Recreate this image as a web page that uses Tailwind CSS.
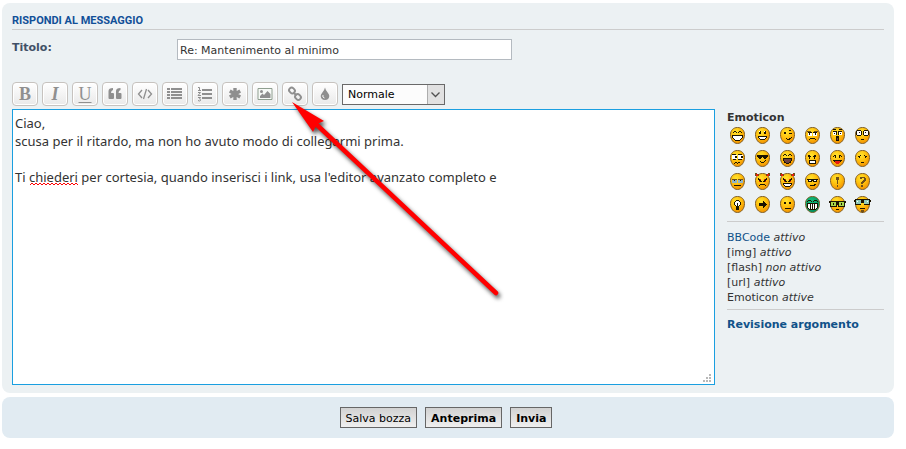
<!DOCTYPE html>
<html lang="it">
  <head>
    <meta charset="utf-8" />
    <title>Rispondi al messaggio</title>
    <script src="https://cdn.jsdelivr.net/npm/@tailwindcss/browser@4"></script>
  </head>
  <body class="bg-white font-['DejaVu_Sans',sans-serif] text-[11px] leading-[15px] text-[#333333]">
    <form class="relative flex flex-col gap-1 pt-[3px] pr-3 pl-[2px]">
      <section class="rounded-lg bg-[#ecf1f3] px-[10px] pt-[10px] pb-2">
        <h3 class="border-b border-[#cccccc] pb-px font-['Roboto',sans-serif] text-[11px] font-bold leading-[15px] text-[#115098]">RISPONDI AL MESSAGGIO</h3>

        <div class="flex pt-[9px]">
          <label for="subject" class="w-[165px] pt-px font-bold text-[#425067]">Titolo:</label>
          <input id="subject" type="text" value="Re: Mantenimento al minimo" class="h-[21px] w-[335px] border border-[#b4bac0] bg-white px-[2px] pt-px" />
        </div>

        <div id="toolbar" class="flex items-center gap-1 pt-[22px] pb-[3px]">
          <div class="relative">
            <select aria-label="Dimensione carattere" class="h-[21px] w-[103px] appearance-none border border-[#696969] bg-[#fcfcfc] pt-px pl-[5px] text-black">
              <option>Normale</option>
            </select>
            <svg class="pointer-events-none absolute top-px right-px" width="17" height="19" viewBox="0 0 17 19" fill="none">
              <path d="M0 0H17V19H0Z" fill="#e1e1e1" />
              <path d="M.5 0V19" stroke="#adadad" />
              <path d="M4.500 7.500L8.500 11.500L12.500 7.500" stroke="#505050" stroke-width="1.300" />
            </svg>
          </div>
        </div>

        <div class="flex gap-3">
          <div class="relative flex-1">
            <textarea aria-label="Messaggio" spellcheck="false" class="block h-[276px] w-full resize-none border border-[#1a9fe0] bg-white px-[2px] pt-1 font-['Noto_Sans',sans-serif] text-[13px] leading-[18px]">Ciao,
scusa per il ritardo, ma non ho avuto modo di collegarmi prima.

Ti chiederi per cortesia, quando inserisci i link, usa l'editor avanzato completo e</textarea>
            <svg class="pointer-events-none absolute top-[73px] left-[18px]" width="49" height="4" viewBox="0 0 49 4" fill="none" stroke="#ff0000">
              <path d="M0 3L2 1L4 3L6 1L8 3L10 1L12 3L14 1L16 3L18 1L20 3L22 1L24 3L26 1L28 3L30 1L32 3L34 1L36 3L38 1L40 3L42 1L44 3L46 1L48 3" />
            </svg>
            <svg class="pointer-events-none absolute right-[4px] bottom-[3px]" width="8" height="8" viewBox="0 0 8 8" fill="#b8b8b8">
              <path d="M6 0h2v2H6zM3 3h2v2H3zM6 3h2v2H6zM0 6h2v2H0zM3 6h2v2H3zM6 6h2v2H6z" />
            </svg>
          </div>

          <aside class="w-[157px] pt-px">
            <strong class="block">Emoticon</strong>
            <div id="smilies" class="grid grid-cols-[repeat(6,25px)] gap-y-[6px] pt-[2px] pl-[2px]"></div>
            <div class="mt-2 border-t border-[#cccccc] pt-2 pb-1">
              <a href="#" class="text-[#105289]">BBCode</a> <em>attivo</em><br />
              [img] <em>attivo</em><br />
              [flash] <em>non attivo</em><br />
              [url] <em>attivo</em><br />
              Emoticon <em>attive</em>
            </div>
            <div class="border-t border-[#cccccc] pt-[7px]">
              <a href="#" class="font-bold text-[#105289]">Revisione argomento</a>
            </div>
          </aside>
        </div>
      </section>

      <section class="flex justify-center gap-2 rounded-lg bg-[#e1ebf2] py-[10px] pr-1 text-black">
        <button type="button" class="h-[21px] border border-[#666666] bg-linear-to-b from-[#d2d2d2] to-[#efefef] px-[5px] pt-px">Salva bozza</button>
        <button type="button" class="h-[21px] border border-[#666666] bg-linear-to-b from-[#d2d2d2] to-[#efefef] px-[5px] pt-px font-bold">Anteprima</button>
        <button type="submit" class="h-[21px] border border-[#666666] bg-linear-to-b from-[#d2d2d2] to-[#efefef] px-[5px] pt-px font-bold">Invia</button>
      </section>

      <!-- arrow pointing at the link button -->
      <svg class="pointer-events-none absolute top-[90px] left-[285px] drop-shadow-[2px_3px_2px_rgba(0,0,0,0.7)]" width="225" height="215" viewBox="285 90 225 215">
        <path d="M317 125L496 293" stroke="#ff0000" stroke-width="4.500" stroke-linecap="round" />
        <path d="M292 102L324 121L317 124L313 132Z" fill="#ff0000" />
      </svg>
    </form>

    <svg width="0" height="0" class="absolute">
      <defs>
        <radialGradient id="yellow" cx=".4" cy=".3" r=".75">
          <stop offset="0" stop-color="#ffe430" />
          <stop offset=".5" stop-color="#ffbf0c" />
          <stop offset="1" stop-color="#f08c00" />
        </radialGradient>
        <radialGradient id="green" cx=".4" cy=".3" r=".75">
          <stop offset="0" stop-color="#14c07c" />
          <stop offset="1" stop-color="#008858" />
        </radialGradient>
      </defs>
    </svg>

    <script>
      const serif = (letter, cls) =>
        `<span class="font-['Liberation_Serif',serif] text-[18px] leading-5 text-[#8f8f8f] ${cls}">${letter}</span>`
      const svg = (body) =>
        `<svg width="16" height="16" viewBox="0 0 16 16" fill="#8f8f8f">${body}</svg>`

      const tools = [
        ['Grassetto', serif('B', 'font-bold')],
        ['Corsivo', serif('I', 'font-bold italic')],
        ['Sottolineato', serif('U', 'underline underline-offset-2')],
        ['Citazione', svg('<path d="M1.500 5Q1.500 2 6 2V4Q4 4.500 4 7H6Q7 7 7 8V12Q7 13 6 13H2.500Q1.500 13 1.500 12ZM9 5Q9 2 13.500 2V4Q11.500 4.500 11.500 7H13.500Q14.500 7 14.500 8V12Q14.500 13 13.500 13H10Q9 13 9 12Z"/>')],
        ['Codice', svg('<path d="M5 4L1.500 8L5 12M11 4L14.500 8L11 12M9.500 3L6.500 13" fill="none" stroke="#8f8f8f" stroke-width="1.300"/>')],
        ['Elenco', svg('<path d="M0 2h3v2H0zM4 2h11v2H4zM0 5h3v2H0zM4 5h11v2H4zM0 8h3v2H0zM4 8h11v2H4zM0 11h3v2H0zM4 11h11v2H4z"/>')],
        ['Elenco numerato', svg('<path d="M5 3h10v2H5zM5 7h10v2H5zM5 11h10v2H5z"/><path d="M1 1.500H2.500V4.500M1 4.500H4M1 6.500H3.500L1 9.500H4M1 11.500H3.500L2.500 13Q4 13.500 3.500 14.500Q2.500 15.500 1 14.500" fill="none" stroke="#8f8f8f"/>')],
        ['Voce elenco', svg('<path d="M8 2V14M2.800 5L13.200 11M2.800 11L13.200 5" stroke="#8f8f8f" stroke-width="3.400"/>')],
        ['Immagine', svg('<path d="M1 2.500H15V13.500H1Z" fill="#f7faf7" stroke="#8f9f90"/><circle cx="4.500" cy="5.500" r="1.500"/><path d="M3 12V10L5.500 7.500L7 9L10.500 5L13.500 8V12Z"/>')],
        ['Link', svg('<g fill="none" stroke="#8f8f8f" stroke-width="2"><rect x="2" y="2" width="6" height="5" rx="2.500" transform="rotate(45 5 4.500)"/><rect x="8" y="8.500" width="6" height="5" rx="2.500" transform="rotate(45 11 11)"/><path d="M6.500 6.500L9.500 9.500"/></g>')],
        ['Colore carattere', svg('<path d="M8 1.500Q8.600 4.500 10.800 6.800Q12.300 8.500 12.300 10Q12 13.800 8 14Q4 13.800 3.700 10Q3.700 8.500 5.200 6.800Q7.400 4.500 8 1.500Z"/><path d="M6 9Q5 11.500 7.500 12" fill="none" stroke="#f7f7f7"/>')]
      ]

      let buttons = ''
      tools.forEach(([label, icon]) => {
        buttons += `
          <button type="button" aria-label="${label}" class="flex h-6 w-[26px] items-center justify-center rounded-[4px] border border-[#c7c3bf] bg-linear-to-b from-white to-[#e9e9e9] shadow-[inset_0_0_0_1px_#ffffff]">
            ${icon}
          </button>
        `
      })
      document.querySelector('#toolbar').insertAdjacentHTML('afterbegin', buttons)

      // ink letters used by the drawings below
      const inks = { k: '#1c1400', w: '#ffffff', r: '#e81c10', b: '#8eb4c8', g: '#a6d84c', o: '#705018', m: '#6c4040', t: '#8fcabb' }
      // label, then ink and path in turn, on a 15x17 grid
      const smilies = [
        ['Molto felice', ['k', 'M3 5h1v-1h2v1h1v1h-1v-1h-2v1h-1zM8 5h1v-1h2v1h1v1h-1v-1h-2v1h-1zM2 8h11v3h-1v1h-1v1h-1v1h-5v-1h-1v-1h-1v-1h-1z', 'w', 'M3 9h9v2h-1v1h-1v1h-5v-1h-1v-1h-1z']],
        ['Sorriso', ['k', 'M4 4h2v3h-2zM9 4h2v3h-2zM3 9h9v2h-1v1h-1v1h-5v-1h-1v-1h-1z', 'w', 'M4 10h7v1h-1v1h-5v-1h-1zM4 4h1v1h-1zM9 4h1v1h-1z']],
        ['Occhiolino', ['k', 'M4 5h2v2h-2zM9 6h3v1h-3zM9 3h2v1h-2zM6 11h1v1h2v-1h2v-1h1v1h-1v1h-1v1h-3v-1h-1z']],
        ['Triste', ['o', 'M2 4h4v1h-4zM9 4h4v1h-4z', 'k', 'M3 5h4v1h-4zM8 5h4v1h-4z', 'w', 'M3 6h4v3h-4zM8 6h4v3h-4z', 'k', 'M4 6h1v2h-1zM10 6h1v2h-1zM4 12h1v-1h5v1h1v1h-1v-1h-5v1h-1z']],
        ['Sorpreso', ['k', 'M3 2h3v1h-3zM9 2h3v1h-3zM3 4h4v4h-4zM8 4h4v4h-4zM6 9h3v5h-3z', 'w', 'M3 5h3v3h-3zM9 5h3v3h-3z', 'k', 'M4 6h1v1h-1zM10 6h1v1h-1z', 'm', 'M7 11h1v2h-1z']],
        ['Scioccato', ['k', 'M1 4h1v-1h4v1h1v4h-1v1h-4v-1h-1zM8 4h1v-1h4v1h1v4h-1v1h-4v-1h-1zM6 12h3v1h-3z', 'w', 'M2 4h4v4h-4zM9 4h4v4h-4z', 'k', 'M4 5h1v1h-1zM10 5h1v1h-1z']],
        ['Confuso', ['w', 'M2 5h5v4h-5zM8 5h5v4h-5z', 'k', 'M2 4h4v1h-4zM8 4h4v1h-4zM5 6h2v2h-2zM11 6h2v2h-2zM3 9h3v1h-3zM8 9h4v1h-4zM4 13h1v-1h2v1h1v-1h2v1h-2v1h-1v-1h-2v1h-1z']],
        ['Cool', ['k', 'M2 5h11v2h-1v1h-1v1h-2v-1h-1v-1h-1v1h-1v1h-2v-1h-1v-1h-1zM5 11h1v1h3v-1h1v-1h1v1h-1v1h-1v1h-3v-1h-1z']],
        ['Ride', ['k', 'M3 5h1v-1h2v1h1v1h-1v-1h-2v1h-1zM8 5h1v-1h2v1h1v1h-1v-1h-2v1h-1zM3 8h9v3h-1v2h-2v1h-3v-1h-2v-2h-1z', 'm', 'M4 9h7v2h-1v1h-1v1h-3v-1h-1v-1h-1z']],
        ['Arrabbiato', ['k', 'M3 5h2v1h1v1h-1v2h-1v-2h-1zM11 5h-2v1h-1v1h1v2h1v-2h1zM4 10h7v4h-7z', 'w', 'M5 11h5v2h-5z']],
        ['Linguaccia', ['k', 'M3 6h1v-1h2v3h-1v-2h-1v1h-1zM9 5h2v1h1v1h-1v-1h-1v2h-1zM3 10h9v1h-1v1h-7v-1h-1z', 'r', 'M5 11h5v2h-1v1h-3v-1h-1z']],
        ['Imbarazzato', ['k', 'M3 6h2v1h-2zM5 5h1v1h-1zM9 5h1v1h-1zM10 6h2v1h-2zM4 7h1v1h-1zM10 7h1v1h-1zM6 12h3v1h-3z']],
        ['Piange', ['b', 'M2 6h5v4h-5zM8 6h5v4h-5z', 'o', 'M2 6h5v1h-5zM8 6h5v1h-5z', 'k', 'M4 7h1v1h-1zM10 7h1v1h-1zM4 12h7v1h-7z']],
        ['Cattivo', ['o', 'M0 0h2v1h2v2h-4zM15 0h-2v1h-2v2h4z', 'r', 'M1 1h2v2h-2zM12 1h2v2h-2zM4 6h2v3h-2zM9 6h2v3h-2z', 'k', 'M3 5h1v1h1v1h1v1h1v1h-2v-1h-1v-1h-1zM12 5h-1v1h-1v1h-1v1h-1v1h2v-1h1v-1h1zM4 12h1v-1h5v1h1v1h-1v-1h-5v1h-1z']],
        ['Malizioso', ['o', 'M0 0h2v1h2v2h-4zM15 0h-2v1h-2v2h4z', 'r', 'M1 1h2v2h-2zM12 1h2v2h-2zM4 6h2v3h-2zM9 6h2v3h-2z', 'k', 'M3 5h1v1h1v1h1v1h1v1h-2v-1h-1v-1h-1zM12 5h-1v1h-1v1h-1v1h-1v1h2v-1h1v-1h1zM3 10h9v2h-1v1h-1v1h-5v-1h-1v-1h-1z', 'w', 'M4 11h7v1h-1v1h-5v-1h-1z']],
        ['Occhi al cielo', ['k', 'M2 6h11v1h-1v2h-4v-1h-1v1h-4v-2h-1z', 'w', 'M4 7h2v1h-2zM9 7h2v1h-2z', 'k', 'M5 12h4v-1h2v1h-1v1h-5z']],
        ['Esclamazione', ['o', 'M6 4h3v3h-1v4h-1v-4h-1zM7 12h1v2h-1z']],
        ['Domanda', ['o', 'M4 5h1v-1h5v1h1v3h-1v1h-1v1h-1v1h-2v-2h1v-1h1v-1h1v-2h-2v1h-2zM6 12h2v2h-2z']],
        ['Idea', ['k', 'M5 5h1v-1h3v1h1v1h1v3h-1v1h-1v4h-3v-4h-1v-1h-1v-3h1z', 'w', 'M6 5h3v1h1v3h-1v1h-1v-3h-1v3h-1v-1h-1v-3h1z']],
        ['Freccia', ['k', 'M4 7h4v-2h1v1h1v1h1v1h1v1h-1v1h-1v1h-1v1h-1v-2h-4z']],
        ['Neutrale', ['k', 'M4 6h2v2h-2zM9 6h2v2h-2zM5 12h6v1h-6z']],
        ['Mr. Green', ['k', 'M3 4h3v1h1v1h-1v-1h-3v1h-1v-1h1zM9 4h3v1h1v1h-1v-1h-3v1h-1v-1h1zM2 7h11v5h-1v1h-1v1h-7v-1h-1v-1h-1z', 'w', 'M3 8h9v4h-1v1h-7v-1h-1z', 'k', 'M5 8h1v5h-1zM7 8h1v5h-1zM9 8h1v5h-1z']],
        ['Geek', ['k', 'M-1 5h17v2h-1v4h-7v-2h-1v2h-7v-4h-1z', 'g', 'M1 6h5v4h-5zM9 6h5v4h-5z', 'k', 'M3 7h1v2h-1zM11 7h1v2h-1zM6 13h3v1h-3z']],
        ['Uber Geek', ['k', 'M-1 4h1v-1h15v1h1v2h-1v3h-6v-2h-3v2h-6v-3h-1z', 't', 'M1 4h5v4h-5zM9 4h5v4h-5z', 'w', 'M2 5h1v1h-1zM12 5h1v1h-1z', 'k', 'M5 12h5v1h-5z', 'o', 'M6 14h3v2h-1v1h-1v-1h-1z']]
      ]

      let faces = ''
      smilies.forEach(([label, parts]) => {
        let marks = ''
        for (let i = 0; i < parts.length; i += 2) {
          marks += `<path d="${parts[i + 1]}" fill="${inks[parts[i]]}"/>`
        }
        const skin = label === 'Mr. Green' ? 'green' : 'yellow'
        faces += `
          <button type="button" aria-label="${label}" class="h-[17px] w-[17px]">
            <svg width="17" height="17" viewBox="-1 0 17 17" shape-rendering="crispEdges">
              <path d="M7.500 .5C11.800 .5 14.500 3.500 14.500 7.500C14.500 12.500 11.500 16.500 7.500 16.500C3.500 16.500 .5 12.500 .5 7.500C.5 3.500 3.200 .5 7.500 .5Z" fill="url(#${skin})" stroke="#806028" shape-rendering="auto"/>
              ${marks}
            </svg>
          </button>
        `
      })
      document.querySelector('#smilies').innerHTML = faces
    </script>
  </body>
</html>
